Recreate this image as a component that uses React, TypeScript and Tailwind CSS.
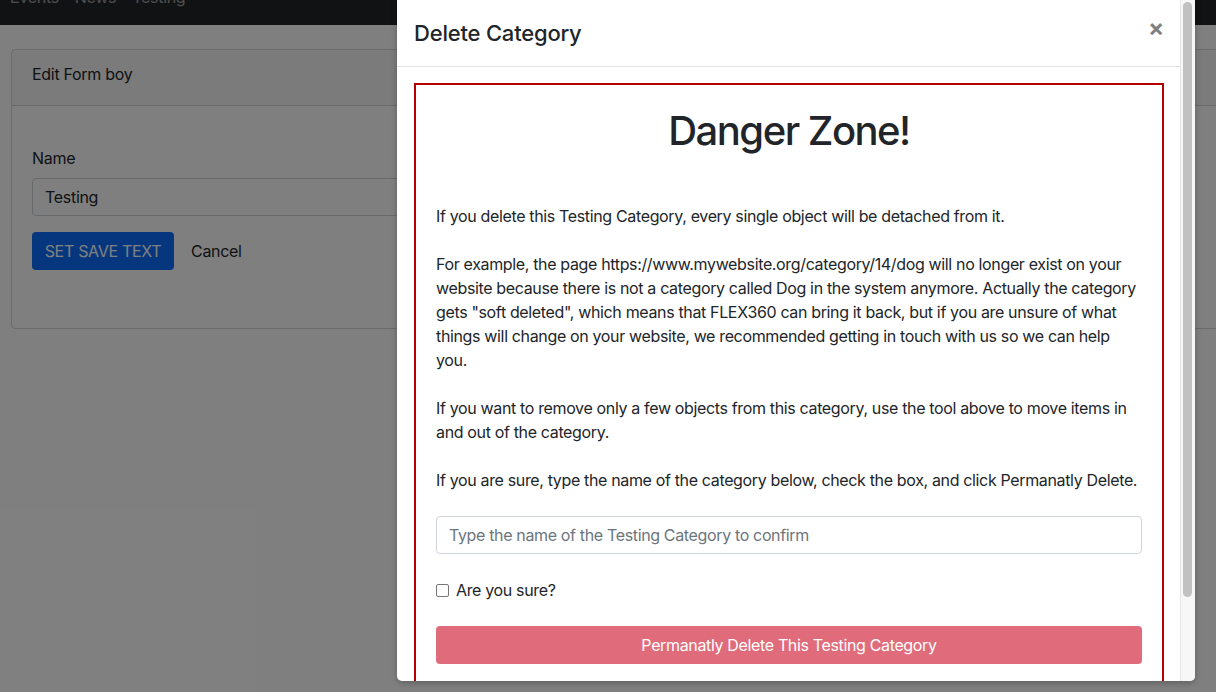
import React from "react";

export default function App() {
  return (
    <div className="relative w-[1216px] h-[692px] overflow-hidden bg-white text-[#212529] font-['Inter','Liberation_Sans',sans-serif] text-[16px] tracking-[-0.3px]">
      {/* page underneath */}
      <div className="h-[25px] bg-[#212529] overflow-hidden">
        <div className="-mt-[15px] flex leading-[24px] text-white/55">
          <span className="ml-[10px]">Events</span>
          <span className="ml-[16px]">News</span>
          <span className="ml-[16px]">Testing</span>
        </div>
      </div>
      <div className="pt-[24px] pl-[11px] w-[1240px]">
        <div className="h-[280px] border border-black/15 rounded-[4px]">
          <div className="h-[56px] bg-black/[0.03] border-b border-black/15 px-[20px] pt-[12px] leading-[24px]">
            Edit Form boy
          </div>
          <div className="px-[20px] pt-[40px]">
            <div className="leading-[24px]">Name</div>
            <div className="mt-[8px] h-[38px] w-[1100px] border border-[#ced4da] rounded-[4px] px-[12px] flex items-center">
              Testing
            </div>
            <div className="mt-[16px] flex items-center">
              <div className="h-[38px] w-[142px] bg-[#0d6efd] text-white rounded-[4px] flex items-center justify-center uppercase">
                Set Save Text
              </div>
              <span className="ml-[17px]">Cancel</span>
            </div>
          </div>
        </div>
      </div>

      {/* backdrop */}
      <div className="absolute inset-0 bg-black/50" />

      {/* modal */}
      <div className="absolute left-[397px] top-0 w-[798px] h-[681px] bg-white rounded-b-[5px] shadow-[0_2px_6px_rgba(0,0,0,0.25)] flex overflow-hidden">
        <div className="w-[783px] flex flex-col">
          <div className="h-[67px] shrink-0 border-b border-[#dee2e6] pl-[17px] pr-[16px] flex items-center justify-between">
            <span className="text-[22px] font-medium tracking-[-0.2px]">Delete Category</span>
            <span className="text-[24px] font-bold text-black/50 leading-none -mt-[10px]">×</span>
          </div>
          <div className="pl-[17px] pr-[16px] pt-[16px]">
            <div className="border-2 border-[#b50000] px-[20px] pt-[22px] pb-[40px] leading-[24px] tracking-[-0.35px] whitespace-nowrap">
              <h1 className="text-[40px] font-medium leading-[48px] text-center tracking-[-1.5px]">Danger Zone!</h1>
              <p className="mt-[49px]">If you delete this Testing Category, every single object will be detached from it.</p>
              <p className="mt-[24px]">
                For example, the page https://www.mywebsite.org/category/14/dog will no longer exist on your
                <br />
                website because there is not a category called Dog in the system anymore. Actually the category
                <br />
                gets "soft deleted", which means that FLEX360 can bring it back, but if you are unsure of what
                <br />
                things will change on your website, we recommended getting in touch with us so we can help
                <br />
                you.
              </p>
              <p className="mt-[24px]">
                If you want to remove only a few objects from this category, use the tool above to move items in
                <br />
                and out of the category.
              </p>
              <p className="mt-[24px]">
                If you are sure, type the name of the category below, check the box, and click Permanatly Delete.
              </p>
              <div className="mt-[24px] h-[38px] border border-[#ced4da] rounded-[4px] px-[12px] flex items-center text-[#6c757d]">
                Type the name of the Testing Category to confirm
              </div>
              <label className="mt-[24px] flex items-center h-[24px]">
                <span className="w-[13px] h-[13px] border border-[#767676] rounded-[2px] bg-white" />
                <span className="ml-[7px]">Are you sure?</span>
              </label>
              <div className="mt-[24px] h-[38px] rounded-[4px] bg-[#e06c7b] text-white flex items-center justify-center">
                Permanatly Delete This Testing Category
              </div>
            </div>
          </div>
        </div>
        {/* scrollbar */}
        <div className="w-[15px] bg-[#f7f7f7] border-l border-[#e6e6e6] relative">
          <div className="absolute left-[2px] top-[2px] w-[9px] h-[595px] rounded-full bg-[#c1c1c1]" />
        </div>
      </div>
    </div>
  );
}
